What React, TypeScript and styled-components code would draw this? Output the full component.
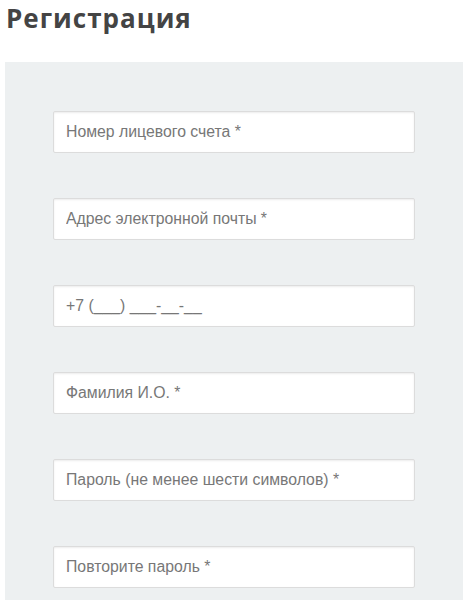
import React from 'react';
import styled, { createGlobalStyle } from 'styled-components';

const GlobalStyle = createGlobalStyle`
  body {
    margin: 0;
    background: #ffffff;
    font-family: "Liberation Sans", Arial, sans-serif;
  }
`;

const FIELDS = [
  { name: 'account', placeholder: 'Номер лицевого счета *', type: 'text' },
  { name: 'email', placeholder: 'Адрес электронной почты *', type: 'email' },
  { name: 'phone', placeholder: '+7 (___) ___-__-__', type: 'tel' },
  { name: 'fio', placeholder: 'Фамилия И.О. *', type: 'text' },
  { name: 'password', placeholder: 'Пароль (не менее шести символов) *', type: 'password' },
  { name: 'password2', placeholder: 'Повторите пароль *', type: 'password' },
];

const App: React.FC = () => (
  <>
    <GlobalStyle />
    <Page>
      <Title>Регистрация</Title>
      <Panel>
        {FIELDS.map((field) => (
          <Field
            key={field.name}
            name={field.name}
            type={field.type}
            placeholder={field.placeholder}
          />
        ))}
      </Panel>
    </Page>
  </>
);

const Page = styled.div`
  width: 469px;
  height: 600px;
  overflow: hidden;
`;

const Title = styled.h1`
  margin: 0;
  padding: 0 0 0 6px;
  height: 62px;
  font-family: "Open Sans", "Liberation Sans", sans-serif;
  font-size: 26px;
  font-weight: 700;
  line-height: 36px;
  letter-spacing: 1px;
  color: #444444;
`;

const Panel = styled.div`
  margin-left: 5px;
  width: 458px;
  min-height: 600px;
  padding: 49px 0 0 48px;
  box-sizing: border-box;
  background-color: #edf0f1;
  display: flex;
  flex-direction: column;
  gap: 45px;
`;

const Field = styled.input`
  width: 362px;
  height: 42px;
  box-sizing: border-box;
  padding: 0 12px;
  border: 1px solid #dcdcdc;
  border-radius: 2px;
  background: #ffffff;
  box-shadow: inset 0 1px 2px rgba(0, 0, 0, 0.08);
  font-family: "Liberation Sans", Arial, sans-serif;
  font-size: 15.8px;
  color: #555;
  outline: none;

  &::placeholder {
    color: #777777;
    opacity: 1;
  }
`;

export default App;
